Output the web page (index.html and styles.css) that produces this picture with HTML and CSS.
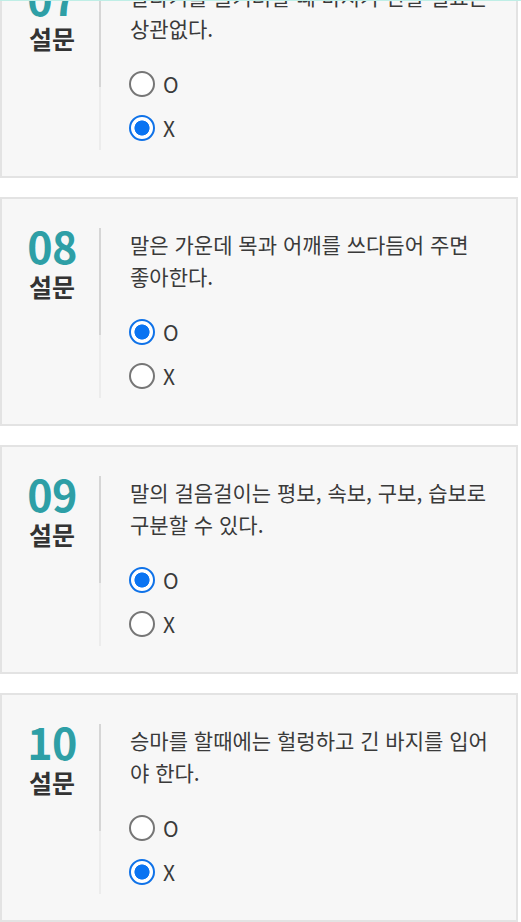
FILE: index.html
```html
<!DOCTYPE html>
<html lang="ko">
<head>
<meta charset="utf-8">
<title>설문</title>
<link rel="stylesheet" href="styles.css">
</head>
<body>
<div class="topline"></div>
<main class="list">
  <section class="card">
    <div class="num-col">
      <div class="num">07</div>
      <div class="label">설문</div>
    </div>
    <div class="content">
      <p class="q">말타기를 즐기려할 때 바지가 편할 필요는 상관없다.</p>
      <div class="opts">
        <label class="opt"><input type="radio" name="q7"><span>O</span></label>
        <label class="opt"><input type="radio" name="q7" checked><span>X</span></label>
      </div>
    </div>
  </section>
  <section class="card">
    <div class="num-col">
      <div class="num">08</div>
      <div class="label">설문</div>
    </div>
    <div class="content">
      <p class="q">말은 가운데 목과 어깨를 쓰다듬어 주면 좋아한다.</p>
      <div class="opts">
        <label class="opt"><input type="radio" name="q8" checked><span>O</span></label>
        <label class="opt"><input type="radio" name="q8"><span>X</span></label>
      </div>
    </div>
  </section>
  <section class="card">
    <div class="num-col">
      <div class="num">09</div>
      <div class="label">설문</div>
    </div>
    <div class="content">
      <p class="q">말의 걸음걸이는 평보, 속보, 구보, 습보로 구분할 수 있다.</p>
      <div class="opts">
        <label class="opt"><input type="radio" name="q9" checked><span>O</span></label>
        <label class="opt"><input type="radio" name="q9"><span>X</span></label>
      </div>
    </div>
  </section>
  <section class="card">
    <div class="num-col">
      <div class="num">10</div>
      <div class="label">설문</div>
    </div>
    <div class="content">
      <p class="q">승마를 할때에는 헐렁하고 긴 바지를 입어야 한다.</p>
      <div class="opts">
        <label class="opt"><input type="radio" name="q10"><span>O</span></label>
        <label class="opt"><input type="radio" name="q10" checked><span>X</span></label>
      </div>
    </div>
  </section>
</main>
</body>
</html>
```
FILE: styles.css
```css
* { box-sizing: border-box; }
html, body { margin: 0; padding: 0; background: #fff; }
body {
  font-family: "Noto Sans CJK KR", "Noto Sans", sans-serif;
  color: #3a3a3a;
  overflow: hidden;
}
.topline {
  position: fixed;
  top: 0; left: 0; right: 0;
  height: 1px;
  background: #bfeee6;
  z-index: 2;
}
.list {
  margin-top: -51px;
  width: 518px;
  display: flex;
  flex-direction: column;
  gap: 19px;
}
.card {
  display: flex;
  align-items: flex-start;
  background: #f7f7f7;
  border: 2px solid #e3e3e3;
  padding: 29px 0 26px 0;
}
.num-col {
  width: 97px;
  flex: none;
  display: flex;
  flex-direction: column;
  align-items: center;
}
.num {
  font-size: 43px;
  line-height: 34px;
  font-weight: 700;
  color: #2e9fa6;
  letter-spacing: -0.5px;
  padding-left: 3px;
}
.label {
  margin-top: 9px;
  font-size: 25px;
  line-height: 30px;
  font-weight: 700;
  color: #333;
  padding-left: 3px;
}
.content {
  flex: 1;
  padding: 0 27px 0 31px;
  background:
    linear-gradient(#d6d6d6, #d6d6d6) left top / 2px 107px no-repeat,
    linear-gradient(#ececec, #ececec) left top / 2px 100% no-repeat;
}
.q {
  margin: 0;
  font-size: 21px;
  line-height: 32px;
  color: #3a3a3a;
}
.opts {
  margin-top: 18px;
  display: flex;
  flex-direction: column;
}
.opt {
  height: 44px;
  display: flex;
  align-items: center;
  gap: 8px;
  font-size: 21px;
  color: #3a3a3a;
}
.opt input {
  appearance: none;
  -webkit-appearance: none;
  width: 26px;
  height: 26px;
  margin: 0 0 0 -1px;
  flex: none;
  border-radius: 50%;
  border: 2px solid #767676;
  background: #fff;
}
.opt input:checked {
  border: 2.5px solid #0f72e8;
  background: radial-gradient(circle, #0a74f2 0 7.2px, #fff 7.9px);
}
```
